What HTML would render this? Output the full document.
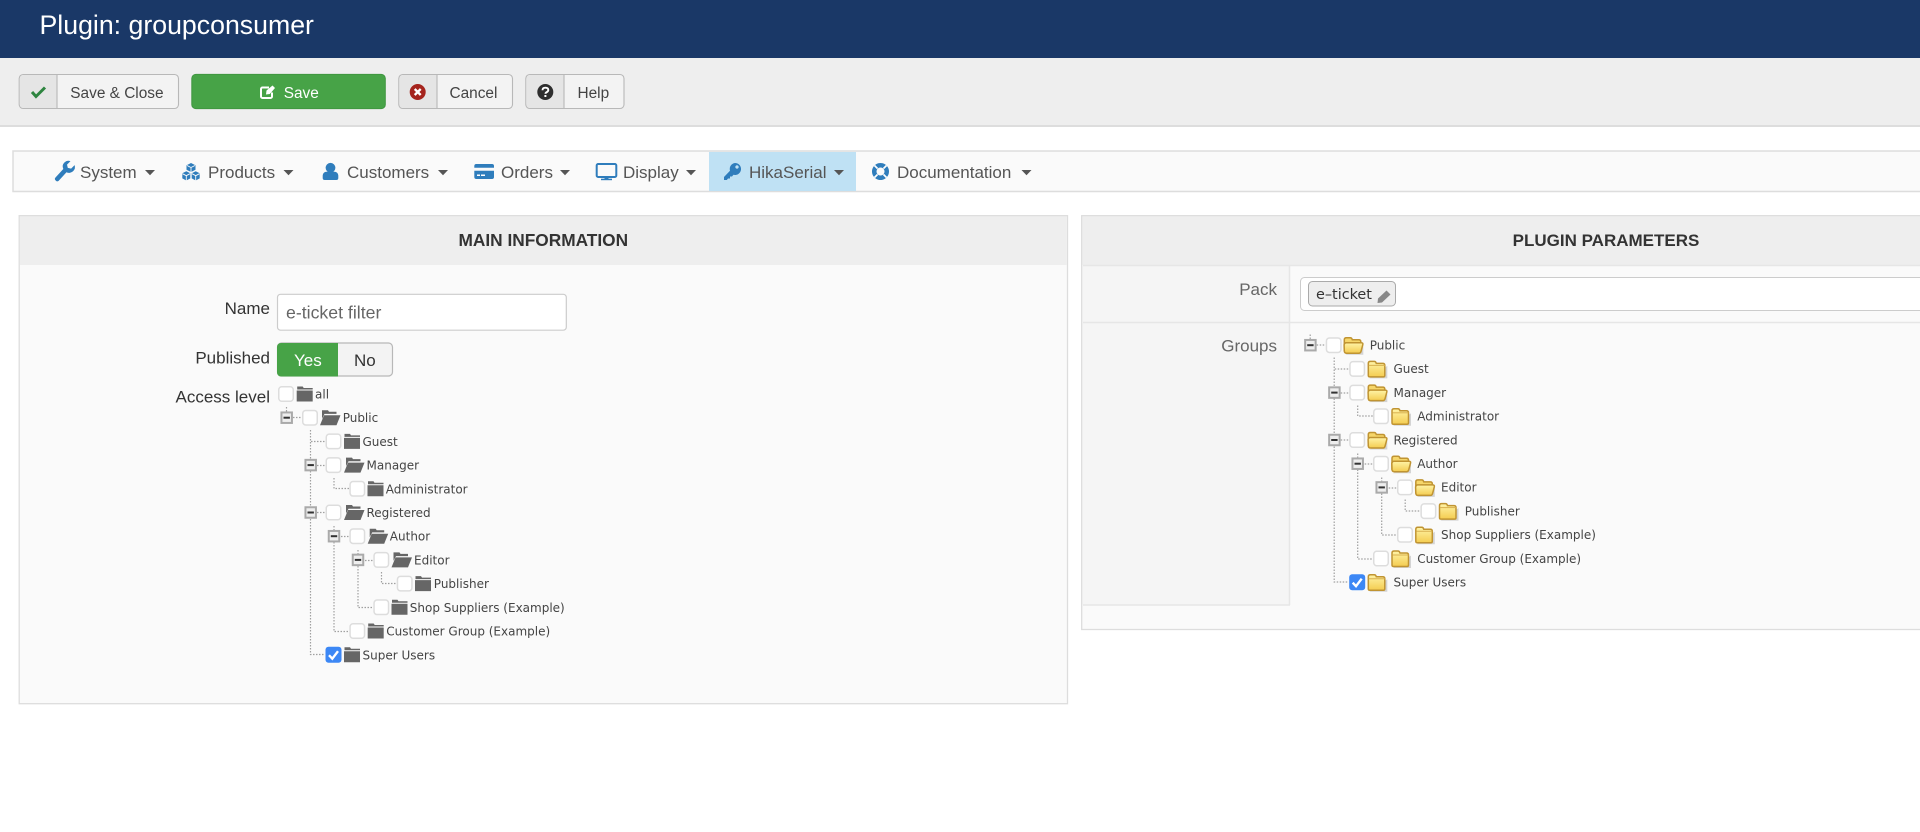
<!DOCTYPE html>
<html lang="en"><head><meta charset="utf-8"><title>Plugin: groupconsumer</title>
<style>
html,body{margin:0;padding:0;width:1920px;height:832px;overflow:hidden;background:#fff}
svg{display:block;position:absolute;left:0;top:0}
text{font-family:"Liberation Sans",Arial,sans-serif;white-space:pre}
.n{font-size:17px;fill:#555}
.b{font-size:15.4px;fill:#444}
.l{font-size:17px;fill:#333}
.g{font-size:17px;fill:#666}
.h{font-size:17.3px;font-weight:bold;fill:#333;text-anchor:middle}
.t text,text.t{font-family:"DejaVu Sans",sans-serif;font-size:12px;fill:#444}
.d{fill:none;stroke:#a0a0a0;stroke-width:1.2;stroke-dasharray:1.5 1.5}
</style></head><body>
<svg width="1920" height="832" viewBox="0 0 1920 832" xmlns="http://www.w3.org/2000/svg">
<defs>
<linearGradient id="yb" x1="0" y1="0" x2="0" y2="1"><stop offset="0" stop-color="#fff4a8"/><stop offset="1" stop-color="#f4cc50"/></linearGradient>
<g id="cb"><rect x=".75" y="-7.25" width="14.5" height="14.5" rx="3" fill="#fff" stroke="#ddd" stroke-width="1.5"/></g>
<g id="cc"><rect y="-8" width="16" height="16" rx="3" fill="#3c87f5"/><path d="M3.500 .5 6.800 4 12.500 -3.500" fill="none" stroke="#fff" stroke-width="2.400"/></g>
<g id="mb"><rect x="-5.250" y="-5.250" width="10.500" height="10.500" fill="#eee" stroke="#aaa" stroke-width="2"/><rect x="-3.200" y="-1" width="6.400" height="2" fill="#333"/></g>
<g id="dc"><path d="M.5-7.500h5.500l1 1.500h9v1.500H.5zM0-3.500h16V7.500H0z" fill="#666"/></g>
<g id="do"><path d="M2-7.500h6l1 1.500h7.500v2.200H4.500L2 1z" fill="#666"/><path d="M4-2.500H20.500L16.500 7.500H0z" fill="#666"/></g>
<g id="yc"><path d="M2 9.500H20V-3z" fill="#000" opacity=".15"/><path d="M1-5.500q0-2 2-2h4q1.500 0 2 2h6.500q2 0 2 2V6.500q0 1.500-1.500 1.500H2.500Q1 8 1 6.500z" fill="url(#yb)" stroke="#c09432" stroke-width="1.500"/><path d="M1.500-3.500H17.500" stroke="#d8b050" stroke-width="1" fill="none"/></g>
<g id="yo"><path d="M2 9.500H20V1z" fill="#000" opacity=".15"/><path d="M1 6V-5.500q0-2 2-2h4q1.500 0 2 2h6.500q2 0 2 2v3" fill="#f6d66a" stroke="#c09432" stroke-width="1.500"/><path d="M.8-.5q.5-2 2-2H18q2 0 1.500 2L17.800 6q-.5 2-2 2H3q-1.700 0-2-2z" fill="url(#yb)" stroke="#c09432" stroke-width="1.500"/></g>
<path id="cr" d="M-5-2.500H5L0 2.700z" fill="#555"/>
<g id="sk">
<path class="d" d="M286.500 407V412M293 417.500H302M310.500 430V459M311 441.500H325M317 465.500H325M310.500 471V506M317 512.500H325M310.500 519V654.500H325M334 478V488.500H349M341 536.500H349M334 526V530M334 542V631.500H349M358 550V554M365 560.500H373M358 566V607.500H373M381.500 572V583.500H396"/>
<use href="#mb" x="286.700" y="417.700"/><use href="#mb" x="310.700" y="465.100"/><use href="#mb" x="310.700" y="512.500"/><use href="#mb" x="334" y="536.200"/><use href="#mb" x="358" y="559.900"/>
<use href="#cb" x="302" y="417.700"/><use href="#cb" x="325.500" y="441.400"/><use href="#cb" x="325.500" y="465.100"/><use href="#cb" x="349.300" y="488.800"/><use href="#cb" x="325.500" y="512.500"/><use href="#cb" x="349.300" y="536.200"/><use href="#cb" x="373.300" y="559.900"/><use href="#cb" x="396.700" y="583.600"/><use href="#cb" x="373.300" y="607.300"/><use href="#cb" x="349.300" y="631"/><use href="#cc" x="325.500" y="654.700"/>
</g>
</defs>

<!-- header -->
<rect width="1920" height="58" fill="#1a3867"/>
<text x="39.500" y="34" fill="#fff" style="font-size:26.700px">Plugin: groupconsumer</text>

<!-- toolbar -->
<rect y="58" width="1920" height="67" fill="#eee"/><rect y="125" width="1920" height="2" fill="#ddd"/>
<g stroke="#b8b8b8" stroke-width="1.100">
<rect x="19.200" y="74.500" width="159.300" height="34" rx="4" fill="#f3f3f3"/>
<rect x="398.800" y="74.500" width="113.700" height="34" rx="4" fill="#f3f3f3"/>
<rect x="525.800" y="74.500" width="98.200" height="34" rx="4" fill="#f3f3f3"/>
</g>
<path d="M19.800 79a4 4 0 0 1 4-4H57V108H23.800a4 4 0 0 1-4-4z" fill="#e5e5e5"/>
<path d="M399.300 79a4 4 0 0 1 4-4H437V108H403.300a4 4 0 0 1-4-4z" fill="#e5e5e5"/>
<path d="M526.300 79a4 4 0 0 1 4-4H564V108H530.300a4 4 0 0 1-4-4z" fill="#e5e5e5"/>
<path d="M57 75V108M437 75V108M564 75V108" stroke="#b8b8b8" stroke-width="1.100"/>
<rect x="191.800" y="74.400" width="193.500" height="34.200" rx="4" fill="#47a347" stroke="#3f9640" stroke-width="1"/>
<path d="M32 92 36 96.500 45 87.500" fill="none" stroke="#2e8540" stroke-width="3"/>
<path d="M272 92.500V96.500a1.500 1.500 0 0 1-1.500 1.500H262.500a1.500 1.500 0 0 1-1.500-1.500V89a1.500 1.500 0 0 1 1.500-1.500H269" fill="none" stroke="#fff" stroke-width="2"/><path d="M266.500 90.500 272.500 85.500 275 88 269.800 94 266 94.500z" fill="#fff"/>
<circle cx="417.700" cy="92" r="8" fill="#a5241d"/><path d="M414.700 89 420.700 95M420.700 89 414.700 95" stroke="#fff" stroke-width="2.300"/>
<circle cx="545.300" cy="92" r="8" fill="#2e2e2e"/><path d="M542.500 90.300q0-2.600 2.900-2.600 2.900 0 2.900 2.300 0 1.300-1.500 2.100-1.300.7-1.300 1.700" fill="none" stroke="#fff" stroke-width="1.900"/><rect x="544.400" y="95" width="2" height="2" fill="#fff"/>
<text class="b" x="70.300" y="98">Save &amp; Close</text>
<text class="b" x="283.700" y="98" style="fill:#fff">Save</text>
<text class="b" x="449.500" y="98">Cancel</text>
<text class="b" x="577.500" y="98">Help</text>

<!-- nav -->
<rect x="13" y="151" width="1910" height="40.500" fill="#fafafa" stroke="#ddd" stroke-width="1.500"/>
<rect x="709" y="152" width="147" height="39" fill="#bfe1f4"/>
<g fill="#2f7dbc">
<path d="M55.500 177.500a2 2 0 0 0 0 2.800l.4.4a2 2 0 0 0 2.800 0l7.800-8.500a5.800 5.800 0 0 0 6.800-1.200 5.800 5.800 0 0 0 1.300-5.900l-3.500 3.500-3.300-.7-.8-3.300 3.500-3.500a5.800 5.800 0 0 0-6 1.300 5.800 5.800 0 0 0-1.200 6.600z"/>
<path d="M191 163 195.500 165.200V169.800L191 172 186.500 169.800V165.200zM186.300 171.200 190.300 173.300V178.400L186.300 180.500 182.300 178.400V173.300zM195.700 171.200 199.700 173.300V178.400L195.700 180.500 191.700 178.400V173.300z"/>
<circle cx="330.500" cy="167.800" r="4.900"/><path d="M322.700 178v-2.500a3.700 3.700 0 0 1 3.700-3.700h8.200a3.700 3.700 0 0 1 3.700 3.700V178a2 2 0 0 1-2 2H324.700a2 2 0 0 1-2-2z"/>
<path d="M474.300 166a2 2 0 0 1 2-2h15.700a2 2 0 0 1 2 2v1.800H474.300zM474.300 170.800H494V177a2 2 0 0 1-2 2H476.300a2 2 0 0 1-2-2z"/>
<rect x="477" y="174.500" width="3" height="1.500" fill="#fff"/><rect x="481" y="174.500" width="4" height="1.500" fill="#fff"/>
<path d="M596.700 165.500a1.500 1.500 0 0 1 1.500-1.500h16.600a1.500 1.500 0 0 1 1.500 1.500v10a1.500 1.500 0 0 1-1.500 1.500H598.200a1.500 1.500 0 0 1-1.500-1.500z" fill="none" stroke="#2f7dbc" stroke-width="2"/><rect x="604.500" y="177" width="4" height="2"/><rect x="601" y="178.700" width="11" height="1.500"/>
<path fill-rule="evenodd" d="M735 163a6 6 0 1 1-1.500 11.800L732 176.500H730V178.500H728L726.800 180H724V177L730 170.700A6 6 0 0 1 735 163zM737 165.300a1.700 1.700 0 1 0 .01 0z"/>
<path fill-rule="evenodd" d="M880.500 163a8.500 8.500 0 1 1-.01 0zM880.500 167.500a4 4 0 1 0 .01 0z"/>
</g>
<path d="M191 167.500 187 165.500M191 167.500 195 165.500M191 167.500V172M186.300 175.700 182.500 173.700M186.300 175.700 190 173.700M186.300 175.700V180.500M195.700 175.700 192 173.700M195.700 175.700 199.500 173.700M195.700 175.700V180.500" stroke="#fafafa" stroke-width=".9" fill="none"/>
<path d="M874.500 165.500 877.500 168.500M886.500 165.500 883.500 168.500M874.500 177.500 877.500 174.500M886.500 177.500 883.500 174.500" stroke="#fff" stroke-width="1.600"/>
<text class="n" x="80" y="178">System</text>
<text class="n" x="208" y="178">Products</text>
<text class="n" x="347" y="178">Customers</text>
<text class="n" x="501" y="178">Orders</text>
<text class="n" x="623" y="178">Display</text>
<text class="n" x="749" y="178">HikaSerial</text>
<text class="n" x="897" y="178">Documentation</text>
<use href="#cr" x="150" y="172.500"/><use href="#cr" x="288.500" y="172.500"/><use href="#cr" x="443" y="172.500"/><use href="#cr" x="565" y="172.500"/><use href="#cr" x="691" y="172.500"/><use href="#cr" x="839" y="172.500"/><use href="#cr" x="1026.500" y="172.500"/>

<!-- left panel -->
<rect x="19.200" y="215.700" width="1048.300" height="488" fill="#fafafa" stroke="#ddd" stroke-width="1.300"/>
<rect x="20" y="216.500" width="1046.800" height="48.500" fill="#eee"/>
<text class="h" x="543.300" y="246">MAIN INFORMATION</text>
<text class="l" x="270" y="314" text-anchor="end">Name</text>
<text class="l" x="270" y="363.500" text-anchor="end">Published</text>
<text class="l" x="270" y="402.500" text-anchor="end">Access level</text>
<rect x="277.500" y="294.300" width="288.800" height="35.900" rx="3" fill="#fff" stroke="#ccc" stroke-width="1.200"/>
<text x="286" y="318.500" style="font-size:17.700px;fill:#666">e-ticket filter</text>
<rect x="277.500" y="343" width="115" height="33" rx="4" fill="#f3f3f3" stroke="#b8b8b8" stroke-width="1.200"/>
<path d="M277 347a4 4 0 0 1 4-4H338V376.500H281a4 4 0 0 1-4-4z" fill="#47a347"/>
<text x="294" y="366" style="font-size:17px;fill:#fff">Yes</text>
<text x="354" y="366" style="font-size:17px;fill:#333">No</text>

<!-- left tree -->
<use href="#cb" x="278" y="394"/><use href="#dc" x="296.700" y="394"/>
<use href="#sk"/>
<use href="#do" x="320" y="417.700"/><use href="#dc" x="344" y="441.400"/><use href="#do" x="344" y="465.100"/><use href="#dc" x="367.500" y="488.800"/><use href="#do" x="344" y="512.500"/><use href="#do" x="367.700" y="536.200"/><use href="#do" x="391.500" y="559.900"/><use href="#dc" x="415" y="583.600"/><use href="#dc" x="391.500" y="607.300"/><use href="#dc" x="367.700" y="631"/><use href="#dc" x="344" y="654.700"/>
<g class="t">
<text x="315" y="398.300">all</text>
<text x="342.700" y="421.800">Public</text>
<text x="362.500" y="446">Guest</text>
<text x="366.500" y="469.400">Manager</text>
<text x="385.800" y="493.400">Administrator</text>
<text x="366.500" y="516.800">Registered</text>
<text x="389.800" y="540.500">Author</text>
<text x="414" y="564.500">Editor</text>
<text x="433.800" y="588.200">Publisher</text>
<text x="409.800" y="611.900">Shop Suppliers (Example)</text>
<text x="386.300" y="635.500">Customer Group (Example)</text>
<text x="362.500" y="659.300">Super Users</text>
</g>

<!-- right panel -->
<rect x="1081.700" y="215.700" width="860" height="413.800" fill="#fafafa" stroke="#ddd" stroke-width="1.300"/>
<rect x="1082.500" y="216.500" width="840" height="48.500" fill="#eee"/>
<text class="h" x="1606" y="246" style="font-size:17px">PLUGIN PARAMETERS</text>
<rect x="1082.500" y="265" width="206.500" height="339.500" fill="#f5f5f5"/>
<path d="M1083 265.500H1920M1083 322.500H1920M1289.500 265V605M1083 605H1290" stroke="#e6e6e6" stroke-width="1.500" fill="none"/>
<text class="g" x="1277" y="295" text-anchor="end">Pack</text>
<text class="g" x="1277" y="351.500" text-anchor="end">Groups</text>
<rect x="1300.500" y="277.500" width="640" height="33" rx="4" fill="#fff" stroke="#ccc" stroke-width="1"/>
<rect x="1308.500" y="281.500" width="87" height="24.500" rx="4" fill="#eee" stroke="#aaa" stroke-width="1"/>
<text class="t" x="1316" y="298.800" style="font-size:14.400px;fill:#333">e–ticket</text>
<path d="M1378 298.500 1386.500 290.500 1390.500 294.500 1382 302.500 1377.500 303z" fill="#888"/>

<!-- right tree -->
<use href="#sk" transform="translate(1023.700 -72.500)"/>
<use href="#yo" x="1343.300" y="345.200"/><use href="#yc" x="1367.300" y="368.900"/><use href="#yo" x="1367.300" y="392.600"/><use href="#yc" x="1391" y="416.300"/><use href="#yo" x="1367.300" y="440"/><use href="#yo" x="1391" y="463.700"/><use href="#yo" x="1414.800" y="487.400"/><use href="#yc" x="1438.500" y="511.100"/><use href="#yc" x="1414.800" y="534.800"/><use href="#yc" x="1391" y="558.500"/><use href="#yc" x="1367.300" y="582.200"/>
<g class="t">
<text x="1369.700" y="349.500">Public</text>
<text x="1393.500" y="373.200">Guest</text>
<text x="1393.500" y="396.900">Manager</text>
<text x="1417.300" y="420.600">Administrator</text>
<text x="1393.500" y="444.300">Registered</text>
<text x="1417.200" y="468">Author</text>
<text x="1441" y="491.700">Editor</text>
<text x="1464.700" y="515.400">Publisher</text>
<text x="1441" y="539.100">Shop Suppliers (Example)</text>
<text x="1417.200" y="562.800">Customer Group (Example)</text>
<text x="1393.500" y="586.500">Super Users</text>
</g>
</svg>
</body></html>
